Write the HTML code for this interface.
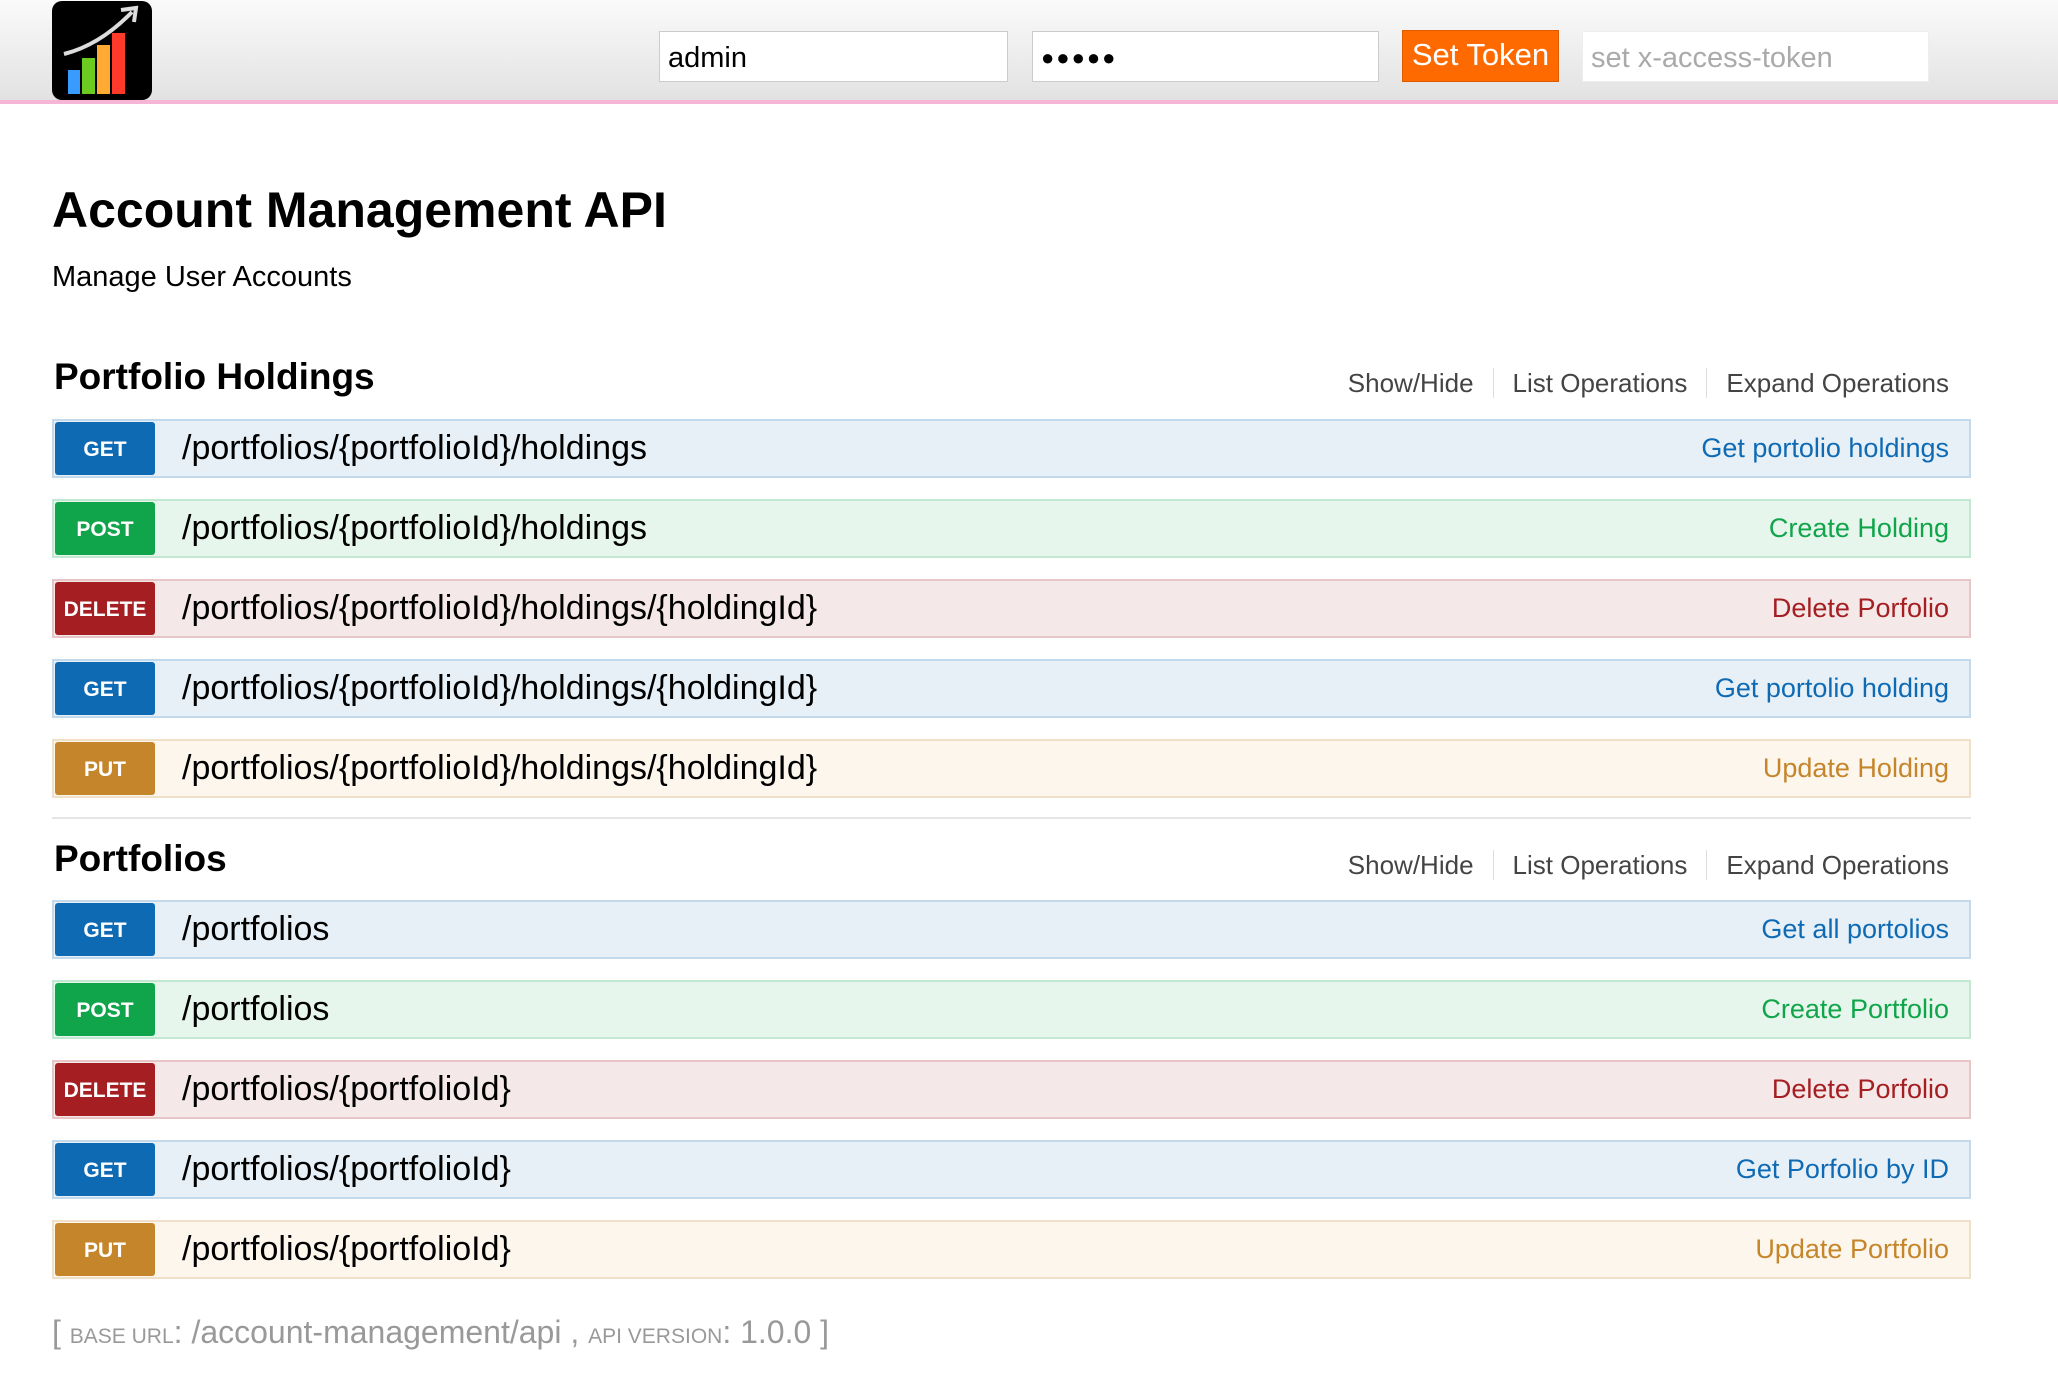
<!DOCTYPE html>
<html><head><meta charset="utf-8"><style>
*{box-sizing:border-box;margin:0;padding:0}
body{width:2058px;height:1380px;background:#fff;font-family:"Liberation Sans",sans-serif;color:#000;position:relative;overflow:hidden}
.hdr{position:absolute;left:0;top:0;width:2058px;height:104px;background:linear-gradient(#fafafa,#e2e2e2);border-bottom:4px solid #f5b5d5}
.logo{position:absolute;left:52px;top:1px;width:100px;height:99px;background:#000;border-radius:10px;overflow:hidden}
.inp{position:absolute;top:31px;height:51px;background:#fff;border:1px solid #ccc;font-size:29px;padding:9px 8px;line-height:34px}
.btn{position:absolute;left:1402px;top:30px;width:157px;height:52px;background:#ff6a00;border:1px solid #e05a00;color:#fff;font-size:31px;text-align:center;line-height:48px}
h1{position:absolute;left:52px;top:180px;font-size:50px;font-weight:bold;line-height:60px}
.sub{position:absolute;left:52px;top:261px;font-size:29px}
h2{position:absolute;left:54px;font-size:37px;font-weight:bold}
.links{position:absolute;right:109px;font-size:26px;color:#444}
.links span{padding:0 19px;border-left:1px solid #ddd}
.links span:first-child{border:none}
.links span:last-child{padding-right:0}
.bar{position:absolute;left:52px;width:1919px;height:59px;border:2px solid}
.bar .b{position:absolute;left:1px;top:1px;width:100px;height:53px;border-radius:3px;color:#fff;font-weight:bold;font-size:21px;text-align:center;line-height:55px}
.bar .p{position:absolute;left:128px;top:0;line-height:55px;font-size:34px}
.bar .d{position:absolute;right:20px;top:0;line-height:55px;font-size:27px}
.g{background:#e7f0f7;border-color:#c3d9ec}.g .b{background:#0f6ab4}.g .d{color:#0f6ab4}
.po{background:#e7f6ec;border-color:#c3e8d1}.po .b{background:#10a54a}.po .d{color:#10a54a}
.de{background:#f5e8e8;border-color:#e8c6c7}.de .b{background:#a41e22}.de .d{color:#a41e22}
.pu{background:#fcf6ed;border-color:#f0e0ca}.pu .b{background:#c5862b}.pu .d{color:#c5862b}
.sep{position:absolute;left:52px;top:817px;width:1919px;height:2px;background:#e5e5e5}
.foot{position:absolute;left:52px;top:1314px;font-size:32px;color:#999}
.foot small{font-size:21px;font-variant:small-caps}
</style></head><body>
<div class="hdr">
<div class="logo"><svg width="100" height="99" viewBox="0 0 100 99">
<rect x="16" y="69" width="12" height="24" fill="#3a9bff"/>
<rect x="30" y="57" width="13" height="36" fill="#6ccb20"/>
<rect x="45" y="44" width="13" height="49" fill="#ffaa33"/>
<rect x="60" y="32" width="13" height="61" fill="#ff3a2a"/>
<path d="M12 53 Q48 44 80 11" stroke="#ddd" stroke-width="4" fill="none"/>
<path d="M69 9 L84 7 L82 21" stroke="#ddd" stroke-width="4" fill="none"/>
</svg></div>
<div class="inp" style="left:659px;width:349px">admin</div>
<div class="inp" style="left:1032px;width:347px;font-size:22px;letter-spacing:2px">●●●●●</div>
<div class="btn">Set Token</div>
<div class="inp" style="left:1582px;width:347px;color:#aaa;border-color:#eee">set x-access-token</div>
</div>
<h1>Account Management API</h1>
<div class="sub">Manage User Accounts</div>
<h2 style="top:356px">Portfolio Holdings</h2>
<div class="links" style="top:368px"><span>Show/Hide</span><span>List Operations</span><span>Expand Operations</span></div>
<div class="bar g" style="top:419px"><div class="b">GET</div><div class="p">/portfolios/{portfolioId}/holdings</div><div class="d">Get portolio holdings</div></div>
<div class="bar po" style="top:499px"><div class="b">POST</div><div class="p">/portfolios/{portfolioId}/holdings</div><div class="d">Create Holding</div></div>
<div class="bar de" style="top:579px"><div class="b">DELETE</div><div class="p">/portfolios/{portfolioId}/holdings/{holdingId}</div><div class="d">Delete Porfolio</div></div>
<div class="bar g" style="top:659px"><div class="b">GET</div><div class="p">/portfolios/{portfolioId}/holdings/{holdingId}</div><div class="d">Get portolio holding</div></div>
<div class="bar pu" style="top:739px"><div class="b">PUT</div><div class="p">/portfolios/{portfolioId}/holdings/{holdingId}</div><div class="d">Update Holding</div></div>
<div class="sep"></div>
<h2 style="top:838px">Portfolios</h2>
<div class="links" style="top:850px"><span>Show/Hide</span><span>List Operations</span><span>Expand Operations</span></div>
<div class="bar g" style="top:900px"><div class="b">GET</div><div class="p">/portfolios</div><div class="d">Get all portolios</div></div>
<div class="bar po" style="top:980px"><div class="b">POST</div><div class="p">/portfolios</div><div class="d">Create Portfolio</div></div>
<div class="bar de" style="top:1060px"><div class="b">DELETE</div><div class="p">/portfolios/{portfolioId}</div><div class="d">Delete Porfolio</div></div>
<div class="bar g" style="top:1140px"><div class="b">GET</div><div class="p">/portfolios/{portfolioId}</div><div class="d">Get Porfolio by ID</div></div>
<div class="bar pu" style="top:1220px"><div class="b">PUT</div><div class="p">/portfolios/{portfolioId}</div><div class="d">Update Portfolio</div></div>
<div class="foot">[ <small>BASE URL</small>: /account-management/api , <small>API VERSION</small>: 1.0.0 ]</div>
</body></html>
